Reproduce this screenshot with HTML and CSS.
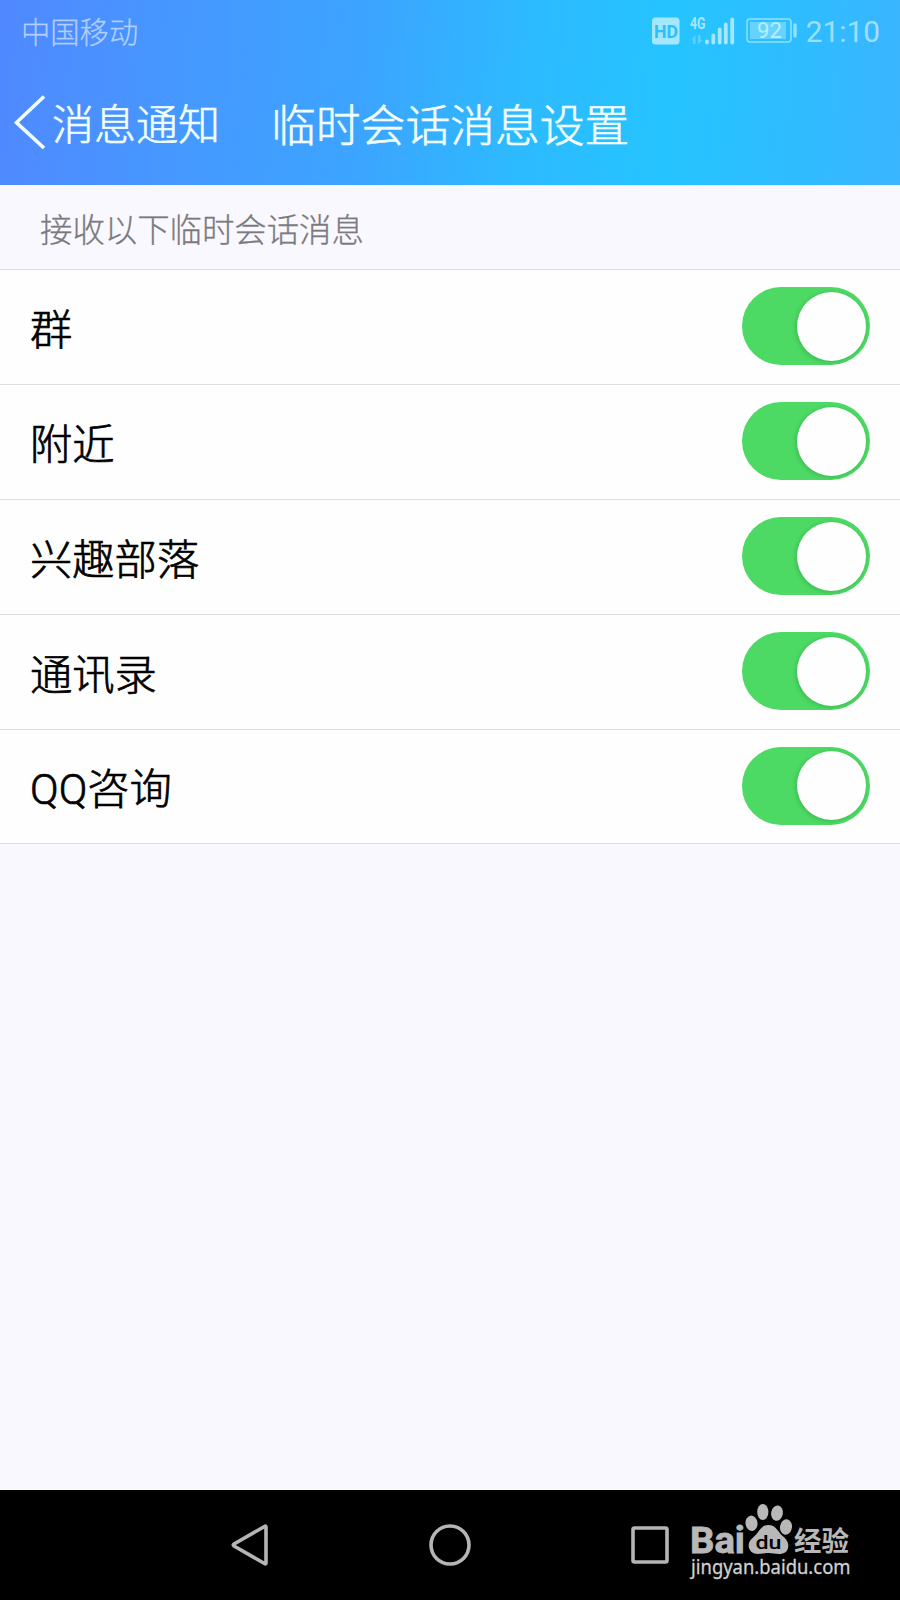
FILE: index.html
```html
<!DOCTYPE html>
<html lang="zh-CN">
<head>
    <meta charset="UTF-8">
    <meta name="viewport" content="width=device-width, initial-scale=1.0">
    <title>临时会话消息设置</title>
    <link rel="stylesheet" href="styles.css">
</head>
<body>
    <header>
      <div class="estado">
        <span class="operador">中国移动</span>
        <div class="iconos">
          <svg class="hd" width="28" height="28" viewBox="0 0 28 28">
            <rect x="0" y="0.5" width="27.5" height="27" rx="3.5" />
            <text x="2" y="20.5" textLength="24" lengthAdjust="spacingAndGlyphs">HD</text>
          </svg>
          <svg class="red" width="46" height="30" viewBox="0 0 46 30">
            <text x="0" y="13" textLength="15.5" lengthAdjust="spacingAndGlyphs">4G</text>
            <path class="flechas" d="M5.5 28V19L1 23.5H3V28ZM8 19V28L13 24H10.5V19Z" />
            <path class="barras" d="M17 25.5V26.5M23.3 19.5V26.5M29.7 13.5V26.5M35.8 8.5V26.5M42.2 3.5V26.5" />
          </svg>
          <svg class="bateria" width="52" height="26" viewBox="0 0 52 26">
            <rect class="borde" x="1" y="1" width="44" height="23" rx="3" />
            <rect class="carga" x="4" y="4" width="36" height="17" />
            <path class="polo" d="M49 7V18" />
            <text x="11" y="20" textLength="25" lengthAdjust="spacingAndGlyphs">92</text>
          </svg>
          <span class="hora">21:10</span>
        </div>
      </div>
      <nav>
        <a class="volver">
          <svg width="32" height="54" viewBox="0 0 32 54">
            <path d="M30 1.5L2.5 27.5L30 53" />
          </svg>
          <span>消息通知</span>
        </a>
        <h1>临时会话消息设置</h1>
      </nav>
    </header>
    <main>
      <h2>接收以下临时会话消息</h2>
      <ul>
        <li><span>群</span><i class="interruptor"></i></li>
        <li><span>附近</span><i class="interruptor"></i></li>
        <li><span>兴趣部落</span><i class="interruptor"></i></li>
        <li><span>通讯录</span><i class="interruptor"></i></li>
        <li><span>QQ咨询</span><i class="interruptor"></i></li>
      </ul>
    </main>
    <footer>
      <svg width="38" height="44" viewBox="0 0 38 44">
        <path d="M34.5 3.5Q36 2.5 36 4V40Q36 41.5 34.5 40.5L4 23Q2.5 22 4 21Z" />
      </svg>
      <svg width="44" height="44" viewBox="0 0 44 44">
        <circle cx="23" cy="22" r="19" />
      </svg>
      <svg width="40" height="40" viewBox="0 0 40 40">
        <rect x="3" y="3" width="34" height="34" rx="1.5" />
      </svg>
    </footer>
    <svg class="marca" width="175" height="85" viewBox="0 0 175 85">
      <text class="bai" x="5" y="53" textLength="55" lengthAdjust="spacingAndGlyphs">Bai</text>
      <ellipse cx="66.5" cy="23.3" rx="6" ry="7.7" transform="rotate(-8 66.5 23.3)" />
      <ellipse cx="77.8" cy="12" rx="5.6" ry="8" />
      <ellipse cx="92" cy="13.2" rx="5.9" ry="7.7" transform="rotate(10 92 13.2)" />
      <ellipse cx="101" cy="27" rx="6" ry="7.7" transform="rotate(8 101 27)" />
      <path d="M83.5 25C90 25 92 30 96 34.5C100 38 103.500 41 103.300 46C103 52 99 54 94 54C90 54 88 53 83.500 53C79 53 77 54 73 54C68 54 64 51 63.700 46C63.500 40 68 38 71.500 34C75.500 29 77 25 83.500 25Z" />
      <text class="du" x="70.5" y="48.5" textLength="26" lengthAdjust="spacingAndGlyphs">du</text>
      <text class="jingyan" x="109" y="50.5" textLength="55" lengthAdjust="spacingAndGlyphs">经验</text>
      <text class="url" x="6" y="74" textLength="159.5" lengthAdjust="spacingAndGlyphs">jingyan.baidu.com</text>
    </svg>
</body>
</html>
```
FILE: styles.css
```css
* {
    margin: 0;
    padding: 0;
    box-sizing: border-box;
}

body {
    height: 1600px;
    display: flex;
    flex-direction: column;
    background-color: #f9f8fe;
    font-family: Roboto, "Noto Sans CJK SC", sans-serif;
    font-weight: 300;
    overflow: hidden;
}

svg {
    display: block;
}

header {
    height: 185px;
    background: linear-gradient(95deg, #5088ff 0%, #4698ff 20%, #3ca4ff 40%, #2dbaff 58%, #25c4ff 74%, #2fbcff 88%, #3ab5ff 100%);
}

.estado {
    height: 62px;
    padding: 0 20px 0 21px;
    display: flex;
    justify-content: space-between;
    align-items: center;
    color: rgba(255, 255, 255, .55);
}

.operador {
    margin-top: -3px;
    font-size: 29.3px;
    -webkit-text-stroke: .3px rgba(255, 255, 255, .4);
}

.iconos {
    display: flex;
    align-items: center;
}

.hd {
    margin-right: 10px;

    rect {
        fill: #a5e7ff;
    }

    text {
        font: bold 19px Roboto;
        fill: #28c0fe;
    }
}

.red {
    margin-right: 10px;

    text {
        font: bold 17px Roboto;
        fill: #a5e7ff;
    }

    .flechas {
        fill: #5bd1ff;
    }

    .barras {
        stroke: #a5e7ff;
        stroke-width: 3.8;
        stroke-linecap: round;
    }
}

.bateria {
    margin-right: 8px;

    .borde {
        fill: none;
        stroke: #8ce3ff;
        stroke-width: 1.5;
    }

    .carga {
        fill: #66d3ff;
    }

    .polo {
        stroke: #8ce3ff;
        stroke-width: 3.5;
        stroke-linecap: round;
    }

    text {
        font: 400 22px Roboto;
        fill: #b8efff;
    }
}

.hora {
    margin-top: 1px;
    font-size: 29.8px;
    font-weight: 400;
    line-height: 30px;
}

nav {
    height: 120px;
    padding-left: 14px;
    display: flex;
    align-items: center;
    color: #f2ffff;
    -webkit-text-stroke: .6px #f2ffff;
}

.volver {
    display: flex;
    align-items: center;
    margin-right: 51px;
    font-size: 42px;

    path {
        fill: none;
        stroke: #f2ffff;
        stroke-width: 3.6;
    }

    span {
        margin: -2px 0 0 6px;
    }
}

h1 {
    padding-top: 1px;
    font-size: 44.8px;
    font-weight: 300;
}

h2 {
    height: 85px;
    padding-left: 40px;
    border-bottom: 1px solid #dedee0;
    font-size: 32.4px;
    font-weight: 300;
    line-height: 92px;
    color: #7b7a7f;
    -webkit-text-stroke: .3px #7b7a7f;
}

ul {
    list-style: none;
    background-color: #fefefe;
}

li {
    height: 115px;
    padding: 0 30px;
    display: flex;
    justify-content: space-between;
    align-items: center;
    border-bottom: 1px solid #dedee0;
    font-size: 42.3px;
    color: #000;

    &:last-child {
        height: 114px;
    }

    span {
        margin-top: -2px;
        -webkit-text-stroke: .7px #000;
    }
}

.interruptor {
    width: 128px;
    height: 78px;
    margin-top: -2px;
    padding: 4.5px 4px;
    display: flex;
    justify-content: flex-end;
    border-radius: 39px;
    background-color: #4cd964;

    &::after {
        content: "";
        width: 69px;
        height: 69px;
        border-radius: 50%;
        background-color: #fefefe;
        box-shadow: -1px 1px 4px rgba(0, 60, 10, .22);
    }
}

footer {
    height: 110px;
    margin-top: auto;
    padding: 0 230px;
    display: flex;
    justify-content: space-between;
    align-items: center;
    background-color: #000;

    svg {
        fill: none;
        stroke: #b5b5b5;
        stroke-width: 3.6;
    }
}

/* LOGO ENCIMA DE LA BARRA INFERIOR */
.marca {
    position: absolute;
    left: 685px;
    top: 1500px;
    fill: #b8b8b8;
}

.bai {
    font: bold 36px Roboto;
    stroke: #b8b8b8;
    stroke-width: .8;
}

.du {
    font: 500 19px Roboto;
    fill: #000;
}

.jingyan {
    font: bold 27px "Noto Sans CJK SC";
}

.url {
    font: 400 19px "Noto Sans";
    fill: #d0d0d0;
    stroke: #d0d0d0;
    stroke-width: .3;
}
```
